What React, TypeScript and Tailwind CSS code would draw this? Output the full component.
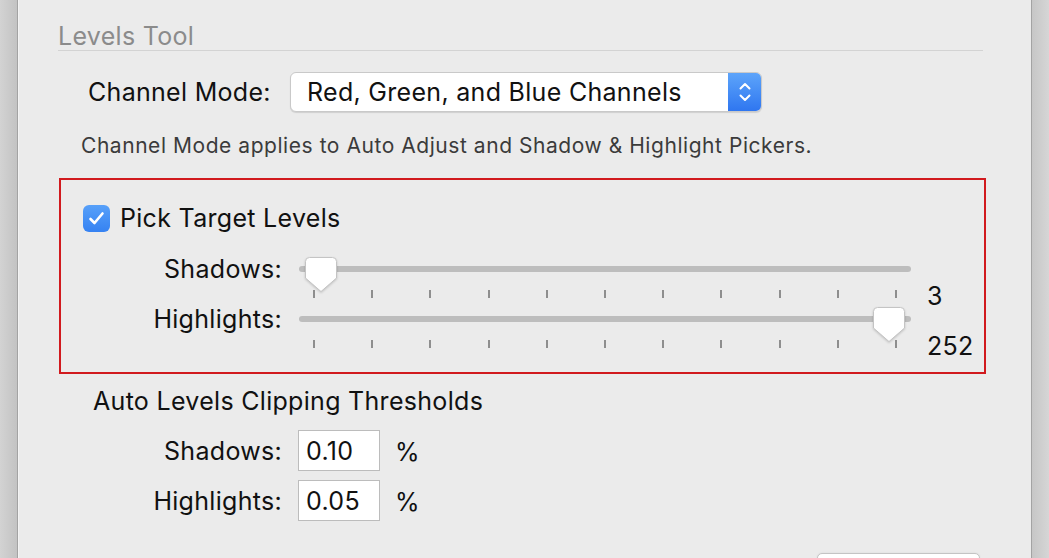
import React from "react";

const TICKS = Array.from({ length: 11 });

function Thumb({ value }: { value: number }) {
  // track is 612 wide, first tick centre at 15, last at 597
  const centre = 15 + (value / 255) * 582;
  return (
    <svg
      width="32"
      height="36"
      viewBox="0 0 32 36"
      className="absolute top-[1px] z-10 drop-shadow-[0_1px_1px_rgba(0,0,0,0.18)]"
      style={{ left: centre - 16 }}
    >
      <path
        d="M4.5 0.5 H27.5 Q31.5 0.5 31.5 4.5 V21 L16 34.5 L0.5 21 V4.5 Q0.5 0.5 4.5 0.5 Z"
        fill="#ffffff"
        stroke="#c4c4c4"
      />
    </svg>
  );
}

function SliderRow({ label, value }: { label: string; value: number }) {
  return (
    <div>
      <div className="flex h-[26px] items-center">
        <div className="w-[221px] text-right">{label}</div>
        <div className="relative ml-[17px] h-[26px] w-[612px]">
          <div className="absolute left-0 right-0 top-[10px] h-[6px] rounded-full bg-[#bdbdbd]" />
          <Thumb value={value} />
        </div>
      </div>
      <div className="flex h-[24px] items-center">
        <div className="ml-[238px] flex w-[612px] justify-between px-[14px]">
          {TICKS.map((_, i) => (
            <div key={i} className="h-[8px] w-[2px] bg-[#8e8e8e]" />
          ))}
        </div>
        <div className="ml-[16px] pt-[4px]">{value}</div>
      </div>
    </div>
  );
}

function FieldRow({ label, value }: { label: string; value: string }) {
  return (
    <div className="flex items-center">
      <div className="w-[224px] text-right">{label}</div>
      <div className="ml-[16px] flex h-[41px] w-[82px] items-center border border-[#bcbcbc] bg-white pl-[7px]">
        {value}
      </div>
      <div className="ml-[15px] pt-[3px]">%</div>
    </div>
  );
}

export default function App() {
  return (
    <div className="flex h-[558px] w-[1049px] overflow-hidden font-['Inter',sans-serif] text-[25px] leading-[28px] tracking-[0.3px] text-[#111]">
      <div className="w-[18px] shrink-0 border-r border-[#a3a3a3] bg-gradient-to-r from-[#d3d3d3] to-[#c3c3c3]" />

      <div className="flex-1 border-l border-[#f4f4f4] bg-[#ebebeb] pl-[39px]">
        {/* Levels Tool header */}
        <div className="mt-[22px] w-[925px] border-b border-[#d3d3d3] text-[#8b8b8b]">
          Levels Tool
        </div>

        {/* Channel mode */}
        <div className="mt-[21px] flex items-center">
          <div className="ml-[30px] w-[202px]">Channel Mode:</div>
          <div className="flex h-[40px] w-[472px] overflow-hidden rounded-[6px] border border-[#c9c9c9] bg-white shadow-[0_1px_1px_rgba(0,0,0,0.12)]">
            <div className="flex flex-1 items-center pl-[16px]">Red, Green, and Blue Channels</div>
            <div className="flex w-[33px] flex-col items-center justify-center gap-[4px] bg-gradient-to-b from-[#5da4fa] to-[#2f76f0]">
              <svg width="12" height="8" viewBox="0 0 12 8">
                <path d="M1.5 6.5 L6 2 L10.5 6.5" fill="none" stroke="#fff" strokeWidth="2" strokeLinecap="round" strokeLinejoin="round" />
              </svg>
              <svg width="12" height="8" viewBox="0 0 12 8">
                <path d="M1.5 1.5 L6 6 L10.5 1.5" fill="none" stroke="#fff" strokeWidth="2" strokeLinecap="round" strokeLinejoin="round" />
              </svg>
            </div>
          </div>
        </div>

        <div className="ml-[23px] mt-[22px] text-[21px] leading-[24px] tracking-[0.55px] text-[#3b3b3b]">
          Channel Mode applies to Auto Adjust and Shadow &amp; Highlight Pickers.
        </div>

        {/* Pick target levels */}
        <div className="ml-[1px] mt-[20px] w-[927px] border-2 border-[#d11a1e] pb-[16px] pt-[24px]">
          <div className="flex h-[28px] items-center pl-[22px]">
            <div className="flex h-[27px] w-[27px] items-center justify-center rounded-[6px] bg-gradient-to-b from-[#57a0f9] to-[#3582f2]">
              <svg width="17" height="15" viewBox="0 0 17 15">
                <path d="M2.5 8 L6.5 12 L14.5 2.5" fill="none" stroke="#fff" strokeWidth="2.6" strokeLinecap="round" strokeLinejoin="round" />
              </svg>
            </div>
            <div className="ml-[10px]">Pick Target Levels</div>
          </div>
          <div className="mt-[24px]">
            <SliderRow label="Shadows:" value={3} />
            <SliderRow label="Highlights:" value={252} />
          </div>
        </div>

        {/* Auto levels clipping */}
        <div className="ml-[35px] mt-[13px]">Auto Levels Clipping Thresholds</div>
        <div className="mt-[15px] flex flex-col gap-[9px]">
          <FieldRow label="Shadows:" value="0.10" />
          <FieldRow label="Highlights:" value="0.05" />
        </div>

        <div className="ml-[759px] mt-[32px] h-[30px] w-[163px] rounded-[5px] border border-[#c4c4c4] bg-white shadow-[0_0_2px_rgba(0,0,0,0.08)]" />
      </div>

      <div className="w-[18px] shrink-0 border-l border-[#a3a3a3] bg-gradient-to-r from-[#c6c6c6] to-[#d6d6d6]" />
    </div>
  );
}
